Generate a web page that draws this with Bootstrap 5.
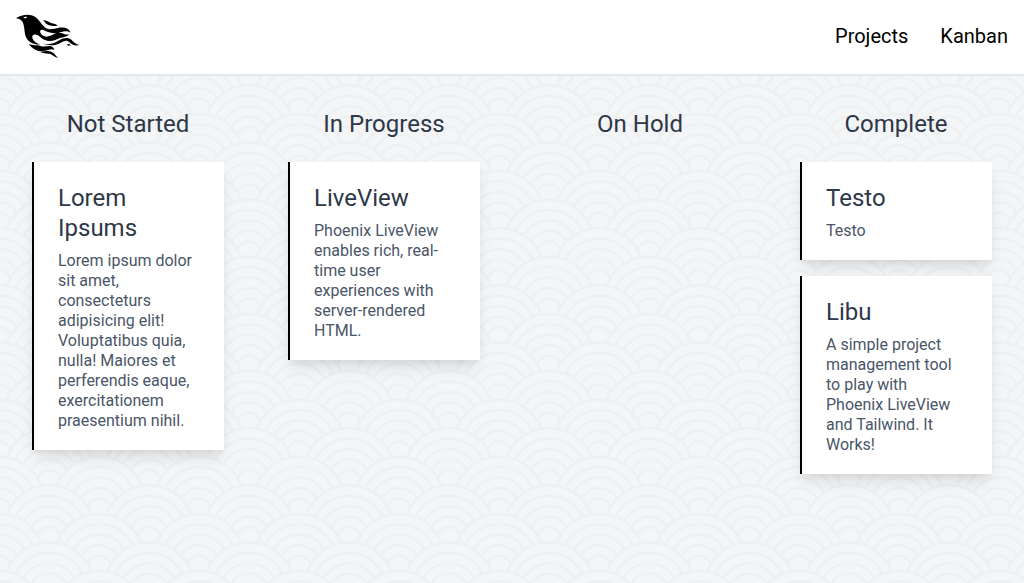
<!DOCTYPE html>
<html lang="en">
<head>
<meta charset="utf-8">
<meta name="viewport" content="width=device-width, initial-scale=1">
<title>Kanban</title>
<link href="https://cdn.jsdelivr.net/npm/bootstrap@5.3.0/dist/css/bootstrap.min.css" rel="stylesheet">
<style>
  body {
    font-family: Roboto, sans-serif;
    color: #2d3748;
    min-height: 100vh;
    background: #f3f5f7 url("data:image/svg+xml,%3Csvg xmlns='http://www.w3.org/2000/svg' xmlns:xlink='http://www.w3.org/1999/xlink' width='100' height='400'%3E%3Cdefs%3E%3Cg id='w' fill='%23f3f5f7' stroke='%23edeff0' stroke-width='2.2'%3E%3Ccircle cy='46' r='45'/%3E%3Ccircle cy='49' r='37.5'/%3E%3Ccircle cy='51' r='29'/%3E%3Ccircle cy='53' r='20.5'/%3E%3Ccircle cy='55' r='12'/%3E%3C/g%3E%3Cg id='p'%3E%3Cuse xlink:href='%23w' x='49'/%3E%3Cuse xlink:href='%23w' x='-1' y='28.57'/%3E%3Cuse xlink:href='%23w' x='99' y='28.57'/%3E%3C/g%3E%3Cpattern id='t' width='100' height='57.143' patternUnits='userSpaceOnUse'%3E%3Cuse xlink:href='%23p' y='-114.286'/%3E%3Cuse xlink:href='%23p' y='-57.143'/%3E%3Cuse xlink:href='%23p'/%3E%3C/pattern%3E%3C/defs%3E%3Crect width='100' height='400' fill='url(%23t)'/%3E%3C/svg%3E") 0 27px;
  }
  .site-bar { background: #fff; border-bottom: 2px solid #e2e8f0; padding: 14px 16px 16px; }
  .site-menu { column-gap: 32px; }
  .site-bar .nav-link { color: #000; font-size: 20px; line-height: 30px; padding: 0; }
  .board { padding-top: 32px; }
  .lane { padding: 0 32px 32px; }
  .lane-title { font-size: 24px; line-height: 32px; font-weight: 400; margin: 0 0 22px; text-align: center; }
  .task { background: #fff; border-left: 2px solid #000; padding: 21px 24px 19px;
    box-shadow: 0 10px 15px -3px rgba(0,0,0,.1), 0 4px 6px -2px rgba(0,0,0,.05); }
  .task h3 { font-size: 24px; line-height: 30px; font-weight: 400; margin: 0 0 8px; }
  .task p { font-size: 16px; line-height: 20px; color: #4a5568; margin: 0; }
</style>
</head>
<body>
<header class="site-bar d-flex justify-content-between align-items-center">
  <a href="#" class="d-block lh-1" aria-label="Home">
    <svg class="d-block" width="64" height="44" viewBox="24 24 192 132" aria-hidden="true">
      <path d="M24 37C38 27 58 24 75 29C91 35 99 55 112 65C124 73 138 69 149 66C164 63 181 64 188 80C176 73 166 76 154 80C138 85 118 78 106 72C97 69 94 76 98 82C103 90 113 94 121 91C134 87 143 79 157 81C168 82 173 88 183 85C177 95 165 92 154 97C139 105 123 108 109 101C99 97 94 87 85 86C76 84 70 90 74 98C78 107 87 113 98 115C80 117 62 110 55 95C48 82 51 66 45 51C42 43 35 38 24 37Z"/>
      <path d="M105 43C114 42 121 47 129 51C136 54 143 52 149 59C138 60 126 61 117 55C112 52 110 47 105 43Z"/>
      <path d="M103 112C124 120 142 110 154 103C167 95 181 93 191 102C198 109 203 115 214 117C203 121 191 116 184 109C174 100 167 106 157 111C141 120 118 120 103 112Z"/>
      <path d="M62 113C74 120 86 115 97 120C107 124 115 120 124 120C133 120 138 126 139 132C130 126 121 133 109 135C90 138 74 130 62 113Z"/>
      <path d="M96 137C109 138 119 132 130 137C141 142 142 149 151 156C137 152 133 145 123 143C113 142 104 142 96 137Z"/>
      <path d="M178 114L184 114L190 120L184 118L180 120Z"/>
      <path fill="#fff" d="M46 34C51 32 54 32 57 32C55 38 49 39 46 34Z"/>
    </svg>
  </a>
  <nav class="nav site-menu">
    <a class="nav-link" href="#">Projects</a>
    <a class="nav-link" href="#">Kanban</a>
  </nav>
</header>
<main class="board container-fluid px-0">
  <div class="row row-cols-4 g-0">
    <section class="col lane">
      <h2 class="lane-title">Not Started</h2>
      <article class="task"><h3>Lorem Ipsums</h3><p>Lorem ipsum dolor sit amet, consecteturs adipisicing elit! Voluptatibus quia, nulla! Maiores et perferendis eaque, exercitationem praesentium nihil.</p></article>
    </section>
    <section class="col lane">
      <h2 class="lane-title">In Progress</h2>
      <article class="task"><h3>LiveView</h3><p>Phoenix LiveView enables rich, real-time user experiences with server-rendered HTML.</p></article>
    </section>
    <section class="col lane">
      <h2 class="lane-title">On Hold</h2>
    </section>
    <section class="col lane">
      <h2 class="lane-title">Complete</h2>
      <div class="d-grid gap-3">
        <article class="task"><h3>Testo</h3><p>Testo</p></article>
        <article class="task"><h3>Libu</h3><p>A simple project management tool to play with Phoenix LiveView and Tailwind. It Works!</p></article>
      </div>
    </section>
  </div>
</main>
<script src="https://cdn.jsdelivr.net/npm/bootstrap@5.3.0/dist/js/bootstrap.bundle.min.js"></script>
</body>
</html>
